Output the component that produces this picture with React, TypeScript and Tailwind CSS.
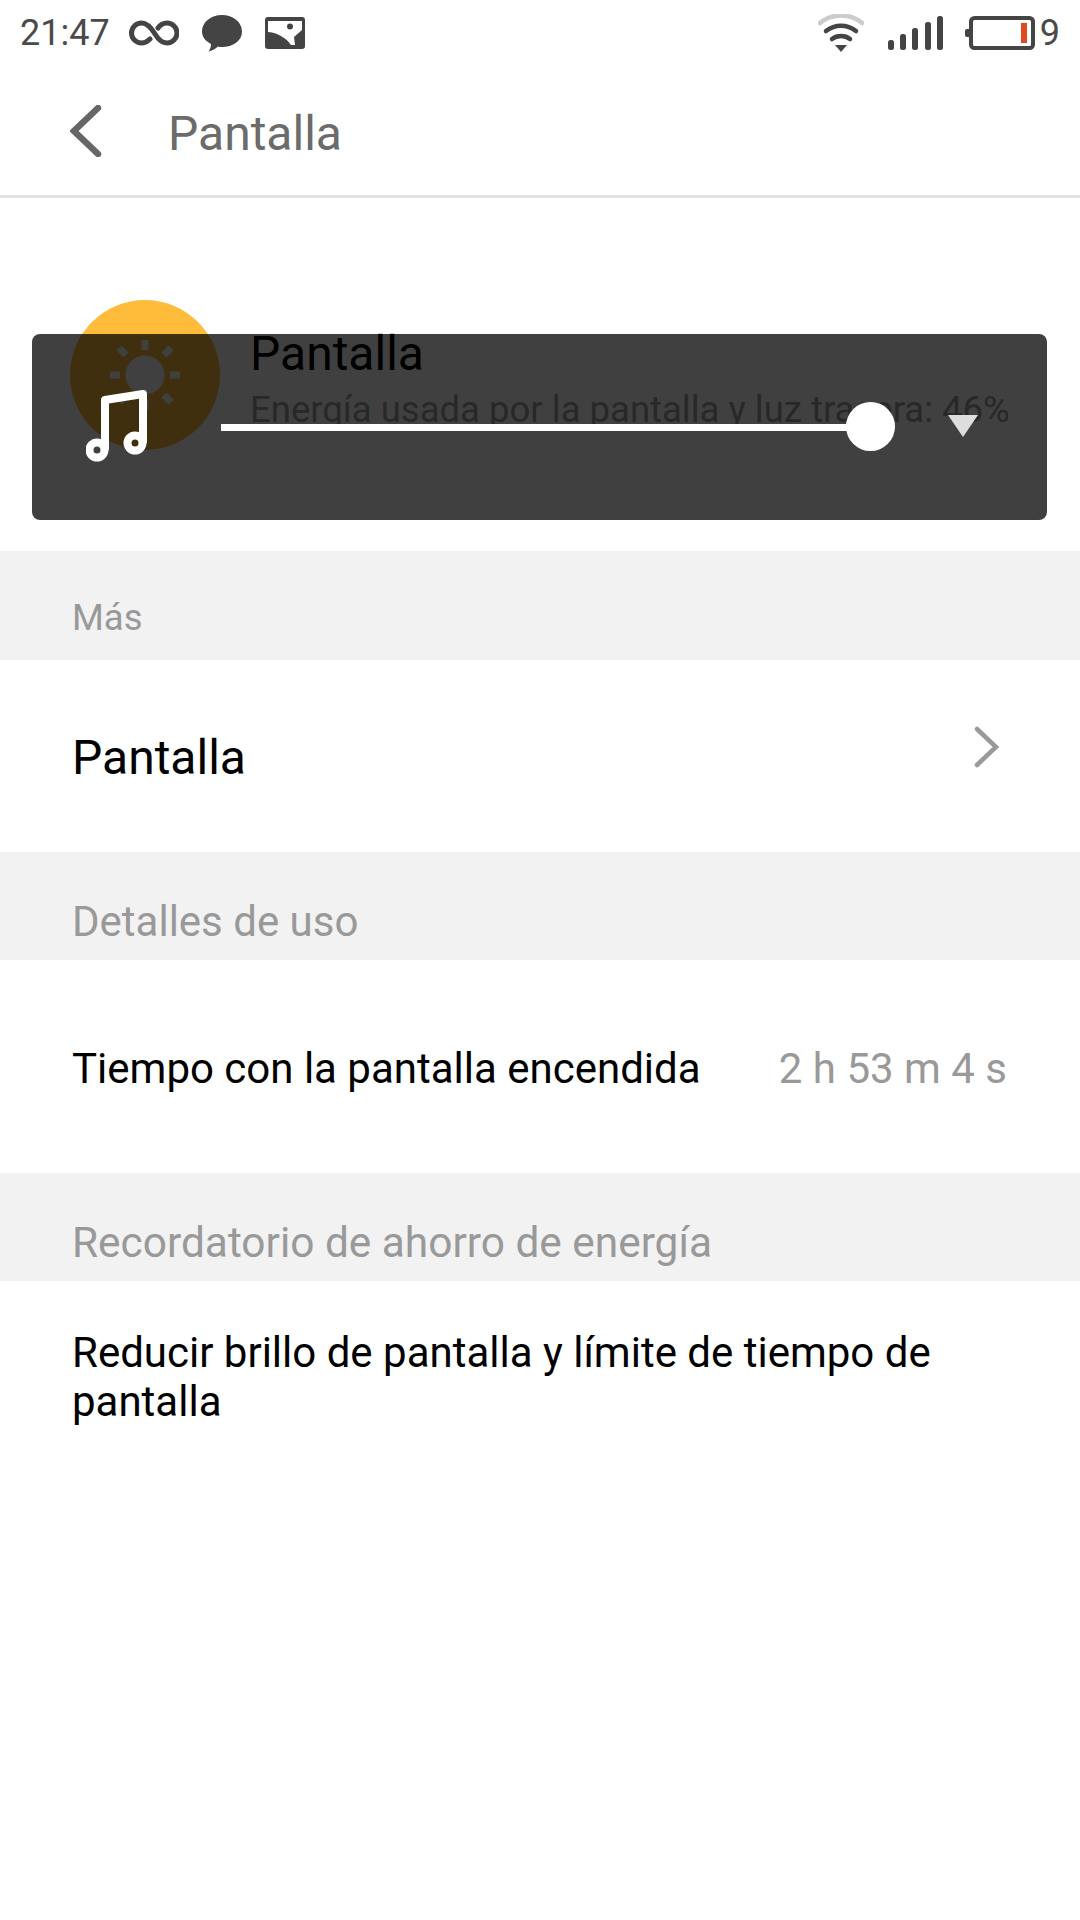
import type { ReactNode } from 'react'

function StatusBar() {
  return (
    <div className="flex h-[66px] items-center justify-between pl-[20px] pr-[20px] text-[#4a4a4a]">
      <div className="flex items-center">
        <span className="text-[36px] leading-none font-normal">21:47</span>
        <svg className="ml-[19px]" width="50" height="26" viewBox="0 0 50 26" fill="none" stroke="#444" strokeWidth="5" strokeLinecap="round">
          <path d="M21 19C18.500 21.500 16 23 12.500 23A10 10 0 0 1 12.500 3C19 3 23 9 26 14C29 19 32.500 23 38 23A10 10 0 0 0 38 3C34 3 31 5 29 8" />
        </svg>
        <svg className="ml-[23px]" width="40" height="37" viewBox="0 0 40 37" fill="#444">
          <path d="M20 0C31 0 40 7 40 16.500C40 26 31 32 20 32C18.500 32 17 32 16 31.500C13 34 10 36 6.500 36.500C8 34.500 9 32 9 29C3.500 26 0 22 0 16.500C0 7 9 0 20 0Z" />
        </svg>
        <svg className="ml-[23px]" width="40" height="32" viewBox="0 0 40 32">
          <rect width="40" height="32" rx="3" fill="#444" />
          <path d="M3 4H37V13L29 20L30 28H26C22 22 14 16 3 15Z" fill="#fff" />
          <circle cx="25" cy="9.500" r="3" fill="#444" />
        </svg>
      </div>
      <div className="flex items-center">
        <svg width="46" height="38" viewBox="0 0 46 38" fill="none" strokeLinecap="round">
          <path d="M2 9C14 -1 32 -1 44 9" stroke="#ccc" strokeWidth="4.500" />
          <path d="M8 17C17 10 29 10 38 17" stroke="#444" strokeWidth="4.500" />
          <path d="M14 25C19 21 27 21 32 25" stroke="#444" strokeWidth="4.500" />
          <path d="M17 31H29L23 38Z" fill="#444" />
        </svg>
        <svg className="ml-[24px]" width="55" height="34" viewBox="0 0 55 34" fill="#444">
          <rect x="0" y="24" width="6" height="10" rx="2.500" />
          <rect x="12" y="18" width="6" height="16" rx="2.500" />
          <rect x="24" y="12" width="6" height="22" rx="2.500" />
          <rect x="37" y="6" width="6" height="28" rx="2.500" />
          <rect x="49" y="0" width="6" height="34" rx="2.500" />
        </svg>
        <svg className="ml-[22px]" width="70" height="34" viewBox="0 0 70 34">
          <rect x="6" y="2" width="62" height="30" rx="3.500" fill="none" stroke="#444" strokeWidth="4" />
          <rect x="0" y="13" width="6" height="8" rx="2" fill="#444" />
          <rect x="56" y="7" width="6" height="20" fill="#e04a1f" />
        </svg>
        <span className="ml-[5px] text-[36px] leading-none font-normal">9</span>
      </div>
    </div>
  )
}

function SectionLabel({ children, tall }: { children: ReactNode; tall?: boolean }) {
  return (
    <div className={`flex items-end bg-[#f2f2f2] pl-[72px] text-[#999] ${tall ? 'h-[108px] pb-[14px] text-[42px] leading-[48px]' : 'h-[109px] pb-[20px] text-[36.500px] leading-[44px]'}`}>
      {children}
    </div>
  )
}

export default function App() {
  return (
    <div
      className="relative min-h-[1920px] w-[1080px] overflow-hidden bg-white"
      style={{ fontFamily: 'Roboto, sans-serif' }}
    >
      <StatusBar />

      <header className="flex h-[132px] items-center border-b-[3px] border-[#e3e3e3] pl-[70px]">
        <svg width="32" height="52" viewBox="0 0 32 52" fill="none" stroke="#666" strokeWidth="6.500" strokeLinecap="round" strokeLinejoin="miter">
          <path d="M28 3L4 26L28 49" />
        </svg>
        <h1 className="ml-[66px] pt-[7px] text-[48px] leading-none font-normal text-[#6b6b6b]">Pantalla</h1>
      </header>

      <section className="flex h-[353px] pl-[70px] pt-[102px]">
        <div className="flex h-[150px] w-[150px] shrink-0 items-center justify-center rounded-full bg-[#ffbb3a]">
          <svg width="70" height="70" viewBox="0 0 70 70" fill="#fff">
            <circle cx="35" cy="35" r="19.500" />
            <rect x="31.500" y="0" width="7" height="10" />
            <rect x="31.500" y="60" width="7" height="10" />
            <rect x="0" y="31.500" width="10" height="7" />
            <rect x="60" y="31.500" width="10" height="7" />
            <rect x="9" y="6.500" width="7" height="10" transform="rotate(-45 12.500 11.500)" />
            <rect x="54" y="6.500" width="7" height="10" transform="rotate(45 57.500 11.500)" />
            <rect x="9" y="53.500" width="7" height="10" transform="rotate(45 12.500 58.500)" />
            <rect x="54" y="53.500" width="7" height="10" transform="rotate(-45 57.500 58.500)" />
          </svg>
        </div>
        <div className="ml-[30px] pt-[26px]">
          <div className="text-[48px] leading-[56px] text-black">Pantalla</div>
          <div className="mt-[6px] text-[36.500px] leading-[44px] whitespace-nowrap text-[#a0a0a0]">
            Energía usada por la pantalla y luz trasera: 46%
          </div>
        </div>
      </section>

      <SectionLabel>Más</SectionLabel>
      <div className="flex h-[192px] items-center justify-between pl-[72px] pr-[80px]">
        <span className="pt-[3px] text-[48px] leading-none text-black">Pantalla</span>
        <svg className="mb-[18px]" width="28" height="44" viewBox="0 0 28 44" fill="none" stroke="#999" strokeWidth="4.500" strokeLinecap="round">
          <path d="M5 4L24 22L5 40" />
        </svg>
      </div>

      <SectionLabel tall>Detalles de uso</SectionLabel>
      <div className="flex h-[213px] items-center justify-between pl-[72px] pr-[73px] pt-[5px] text-[42px] leading-none">
        <span className="text-black">Tiempo con la pantalla encendida</span>
        <span className="text-[#999]">2 h 53 m 4 s</span>
      </div>

      <SectionLabel tall>
        <span className="text-[42.400px]">Recordatorio de ahorro de energía</span>
      </SectionLabel>
      <div className="pl-[72px] pr-[120px] pt-[47px] text-[42px] leading-[49px] text-black">
        Reducir brillo de pantalla y límite de tiempo de pantalla
      </div>

      {/* toast de volumen: va encima de la pantalla */}
      <div className="absolute left-[32px] top-[334px] flex h-[186px] w-[1015px] items-center rounded-[8px] bg-black/[0.75]">
        <svg className="ml-[54px] mt-[-4px] shrink-0" width="62" height="74" viewBox="0 0 62 74" fill="none" stroke="#fff" strokeWidth="8">
          <path d="M19 62V12L57 6V55" strokeLinejoin="round" />
          <circle cx="11" cy="62" r="7.500" />
          <circle cx="49" cy="55" r="7.500" />
        </svg>
        <div className="relative ml-[73px] h-[7px] w-[640px] bg-white">
          <div className="absolute left-[625px] top-[-22px] h-[49px] w-[49px] rounded-full bg-white" />
        </div>
        <svg className="ml-[87px] mt-[-2px]" width="30" height="22" viewBox="0 0 30 22" fill="#ddd">
          <path d="M0 0H30L15 22Z" />
        </svg>
      </div>
    </div>
  )
}
